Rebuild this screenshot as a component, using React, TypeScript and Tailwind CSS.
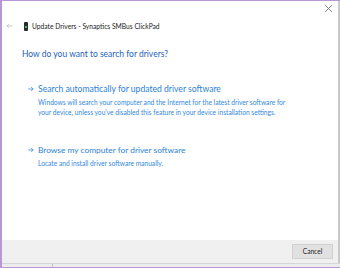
import React from 'react'

const font = { fontFamily: 'Lato, "Noto Sans", sans-serif' }

const Arrow = () => (
    <svg width="6" height="6" viewBox="0 0 7 6" className="shrink-0">
        <path d="M0.3 3h5.8M3.6 0.6l2.4 2.4-2.4 2.4" fill="none" stroke="#2f86de" strokeWidth="0.9" />
    </svg>
)

const Option = ({ title, lines, size }: { title: string; lines: string[]; size: string }) => (
    <div className="flex flex-col">
        <div className="flex items-center gap-[4px] pl-[6px]">
            <Arrow />
            <span className={`${size} leading-[14px] text-[#2c7fd8]`}>{title}</span>
        </div>
        <div className="pl-[16px] pt-[1px] flex flex-col">
            {lines.map((l) => (
                <span key={l} className="text-[6.65px] leading-[10px] text-[#3489e0] whitespace-nowrap">
                    {l}
                </span>
            ))}
        </div>
    </div>
)

const App = () => {
    return (
        <div className="w-[340px] h-[268px] bg-[#fafafa] overflow-hidden" style={font}>
            <div className="w-full h-full flex flex-col border-t border-l-2 border-b border-[#b896d8]">
                <div className="flex flex-1 flex-col bg-white border-r-2 border-[#c9c9c9]">
                    {/* title bar */}
                    <div className="h-[16px] flex justify-end items-start pr-[5px] pt-[3px]">
                        <svg width="9" height="9" viewBox="0 0 10 10">
                            <path d="M1 1l8 8M9 1l-8 8" stroke="#7a7a7a" strokeWidth="1" />
                        </svg>
                    </div>
                    <div className="flex items-center h-[12px] mt-[3px] pl-[4px]">
                        <svg width="7" height="6" viewBox="0 0 8 6" className="mr-[11px]">
                            <path d="M7.5 3h-6.5M3.5 0.6l-2.4 2.4 2.4 2.4" fill="none" stroke="#b5b5b5" strokeWidth="0.8" />
                        </svg>
                        <div className="w-[4px] h-[9px] bg-[#2a2a2a] rounded-[1px] mr-[4px] flex flex-col items-center pt-[4px]">
                            <div className="w-[2px] h-[2px] bg-[#3fc04f]" />
                        </div>
                        <span className="text-[6.7px] text-[#222]">Update Drivers - Synaptics SMBus ClickPad</span>
                    </div>
                    <div className="pl-[20px] pt-[15px]">
                        <div className="text-[8.5px] leading-[15px] text-[#1d5fba]">How do you want to search for drivers?</div>
                        <div className="pt-[20px] flex flex-col gap-[26px]">
                            <Option
                                size="text-[8.6px]"
                                title="Search automatically for updated driver software"
                                lines={[
                                    'Windows will search your computer and the Internet for the latest driver software for',
                                    "your device, unless you've disabled this feature in your device installation settings.",
                                ]}
                            />
                            <Option size="text-[8.35px]" title="Browse my computer for driver software" lines={['Locate and install driver software manually.']} />
                        </div>
                    </div>
                    <div className="flex-1" />
                    <div className="h-[23px] bg-[#f0f0f0] flex justify-end items-center pr-[5px]">
                        <button className="w-[41px] h-[15px] bg-[#e1e1e1] border border-[#d0d0d0] text-[6.6px] text-[#222] leading-none">
                            Cancel
                        </button>
                    </div>
                </div>
                <div className="h-[4px] border-t border-[#d6d6d6] bg-[#ececec] flex">
                    <div className="w-[51px] border-r border-[#c4c4c4]" />
                </div>
            </div>
        </div>
    )
}

export default App
